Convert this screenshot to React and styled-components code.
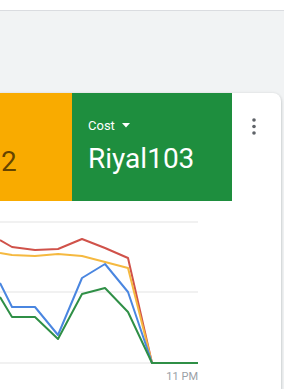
import React from 'react';
import styled, { createGlobalStyle } from 'styled-components';

const GlobalStyle = createGlobalStyle`
  html, body {
    margin: 0;
    padding: 0;
    background: #f1f3f4;
    font-family: Roboto, "Liberation Sans", Arial, sans-serif;
    overflow: hidden;
  }
`

const Page = styled.div`
  width: 284px;
  height: 389px;
  display: flex;
  flex-direction: column;
  background: #f1f3f4;
`

const TopBar = styled.div`
  height: 10px;
  background: #ffffff;
  border-bottom: 1px solid #dadce0;
`

const Content = styled.div`
  flex: 1;
  display: flex;
  flex-direction: column;
  padding: 82px 3px 0 0;
`

const Card = styled.div`
  flex: 1;
  display: flex;
  flex-direction: column;
  background: #ffffff;
  border-radius: 0 8px 0 0;
  box-shadow: 0 1px 2px rgba(60, 64, 67, 0.25), 0 1px 3px 1px rgba(60, 64, 67, 0.1);
`

const TileRow = styled.div`
  display: flex;
  height: 108px;
`

const Tile = styled.div`
  width: ${p => p.$width}px;
  background: ${p => p.$bg};
  color: ${p => p.$fg};
  display: flex;
  flex-direction: column;
  padding: 25px 0 0 ${p => p.$padLeft}px;
  box-sizing: border-box;
`

const TileLabel = styled.div`
  display: flex;
  align-items: center;
  gap: 7px;
  font-size: 13px;
  height: 15px;
  line-height: 15px;
`

const TileValue = styled.div`
  margin-top: ${p => p.$top}px;
  font-size: 28px;
  line-height: 32px;
`

const MenuCell = styled.div`
  flex: 1;
  display: flex;
  justify-content: flex-start;
  padding: 25px 0 0 19px;
`

const ChartArea = styled.div`
  display: flex;
  flex-direction: column;
  width: 200px;
  padding-top: 14px;
`

const AxisRow = styled.div`
  display: flex;
  justify-content: flex-end;
  padding-right: 2px;
  margin-top: 5px;
  font-size: 11px;
  color: #9aa0a6;
  line-height: 13px;
`

const Caret = () => (
  <svg width="8" height="5" viewBox="0 0 8 5">
    <path d="M0 0 L8 0 L4 4.5 Z" fill="#ffffff" />
  </svg>
)

const Kebab = () => (
  <svg width="6" height="18" viewBox="0 0 6 18">
    <circle cx="3" cy="2" r="1.8" fill="#5f6368" />
    <circle cx="3" cy="8.5" r="1.8" fill="#5f6368" />
    <circle cx="3" cy="15" r="1.8" fill="#5f6368" />
  </svg>
)

const xs = [0, 12, 35, 58, 82, 105, 128, 152, 198]
const series = [
  { color: '#d0524a', ys: [25, 32, 35, 34, 24, 33, 43, 148, 148] },
  { color: '#f5b940', ys: [38, 40, 41, 39, 41, 47, 53, 148, 148] },
  { color: '#4a86e0', ys: [68, 92, 92, 120, 63, 49, 77, 148, 148] },
  { color: '#2f8f46', ys: [82, 102, 102, 124, 79, 73, 97, 148, 148] },
]

const Chart = () => (
  <svg width="200" height="150" viewBox="0 0 200 150">
    {[7, 77, 148].map(y => (
      <line key={y} x1="0" x2="198" y1={y} y2={y} stroke="#e3e3e3" strokeWidth="1" />
    ))}
    {series.map(s => (
      <polyline
        key={s.color}
        points={s.ys.map((y, i) => `${xs[i]},${y}`).join(' ')}
        fill="none"
        stroke={s.color}
        strokeWidth="2"
        strokeLinejoin="round"
      />
    ))}
  </svg>
)

const App = () => {
  return (
    <Page>
      <GlobalStyle />
      <TopBar />
      <Content>
        <Card>
          <TileRow>
            <Tile $width={72} $bg="#f9ab00" $fg="rgba(0,0,0,0.62)" $padLeft={1}>
              <TileLabel />
              <TileValue $top={13}>2</TileValue>
            </Tile>
            <Tile $width={160} $bg="#1e8e3e" $fg="#ffffff" $padLeft={16}>
              <TileLabel>
                Cost <Caret />
              </TileLabel>
              <TileValue $top={10}>Riyal103</TileValue>
            </Tile>
            <MenuCell>
              <Kebab />
            </MenuCell>
          </TileRow>
          <ChartArea>
            <Chart />
            <AxisRow>11 PM</AxisRow>
          </ChartArea>
        </Card>
      </Content>
    </Page>
  )
}

export default App;
